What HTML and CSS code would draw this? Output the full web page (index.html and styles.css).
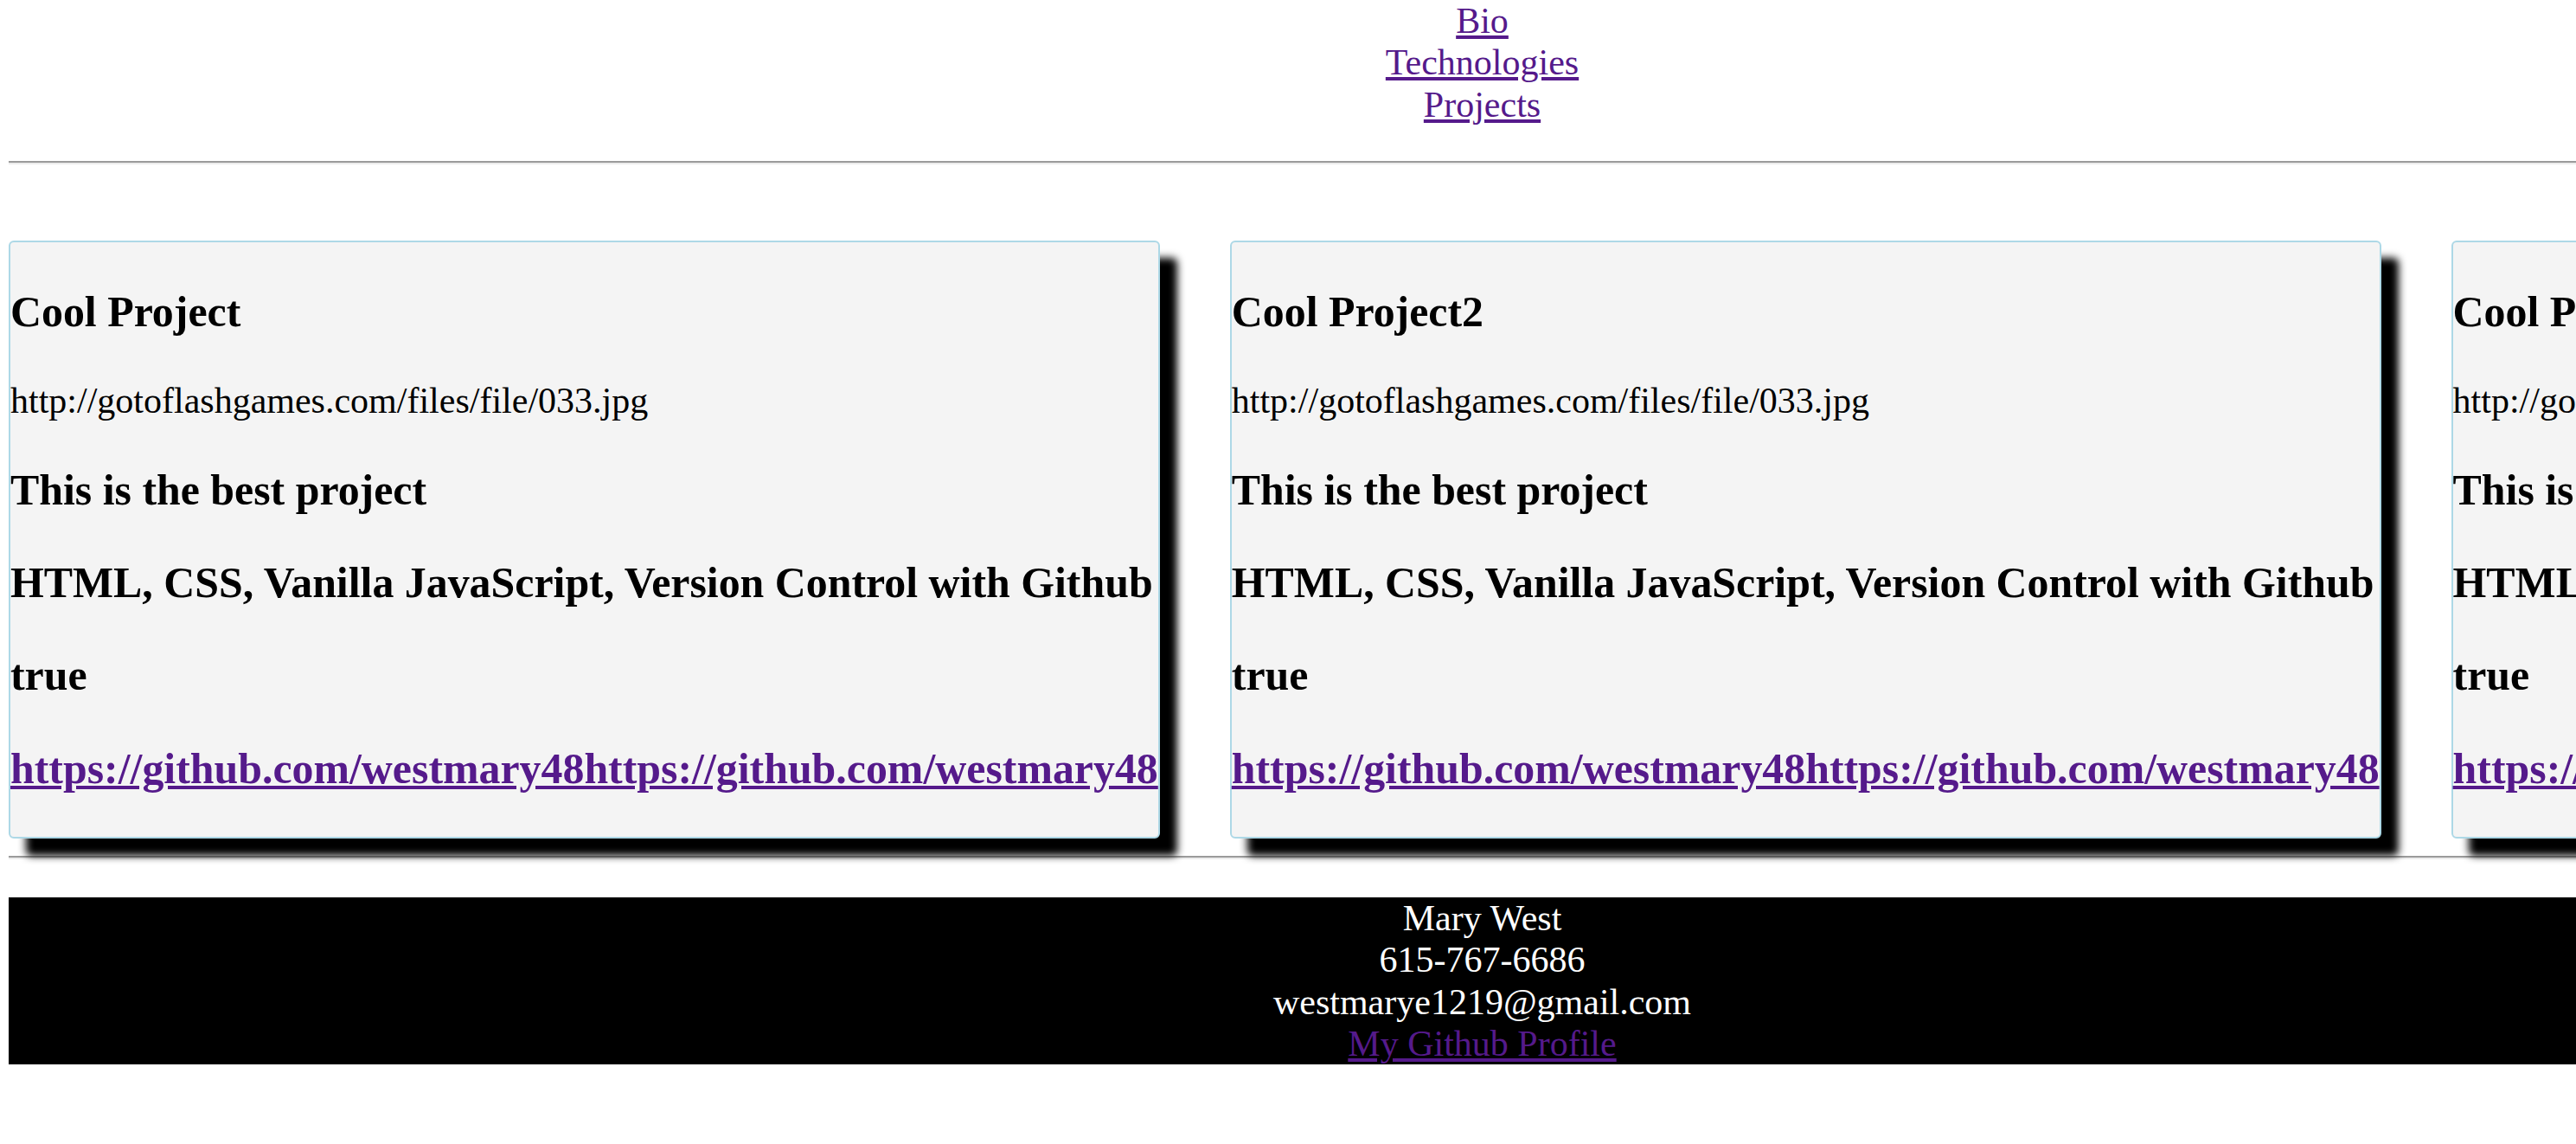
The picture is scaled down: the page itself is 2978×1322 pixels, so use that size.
FILE: index.html
```html
<!DOCTYPE html>
<html lang="en">
<head>
<meta charset="utf-8">
<title>Mary West</title>
<link rel="stylesheet" href="styles.css">
</head>
<body>
<div class="page">
  <nav class="nav">
    <a class="link" href="#bio">Bio</a>
    <a class="link" href="#technologies">Technologies</a>
    <a class="link" href="#projects">Projects</a>
  </nav>
  <hr class="rule rule-top">
  <section class="projects" id="projects">
    <article class="card">
      <h3 class="card-line">Cool Project</h3>
      <p class="card-image">http://gotoflashgames.com/files/file/033.jpg</p>
      <h3 class="card-line">This is the best project</h3>
      <h3 class="card-line">HTML, CSS, Vanilla JavaScript, Version Control with Github</h3>
      <h3 class="card-line">true</h3>
      <h3 class="card-line"><a class="link" href="#">https://github.com/westmary48https://github.com/westmary48</a></h3>
    </article>
    <article class="card">
      <h3 class="card-line">Cool Project2</h3>
      <p class="card-image">http://gotoflashgames.com/files/file/033.jpg</p>
      <h3 class="card-line">This is the best project</h3>
      <h3 class="card-line">HTML, CSS, Vanilla JavaScript, Version Control with Github</h3>
      <h3 class="card-line">true</h3>
      <h3 class="card-line"><a class="link" href="#">https://github.com/westmary48https://github.com/westmary48</a></h3>
    </article>
    <article class="card">
      <h3 class="card-line">Cool Project3</h3>
      <p class="card-image">http://gotoflashgames.com/files/file/033.jpg</p>
      <h3 class="card-line">This is the best project</h3>
      <h3 class="card-line">HTML, CSS, Vanilla JavaScript, Version Control with Github</h3>
      <h3 class="card-line">true</h3>
      <h3 class="card-line"><a class="link" href="#">https://github.com/westmary48https://github.com/westmary48</a></h3>
    </article>
  </section>
  <hr class="rule rule-bottom">
  <footer class="footer">
    <div class="footer-line">Mary West</div>
    <div class="footer-line">615-767-6686</div>
    <div class="footer-line">westmarye1219@gmail.com</div>
    <a class="link" href="#">My Github Profile</a>
  </footer>
</div>
</body>
</html>
```

FILE: styles.css
```css
html {
  overflow: hidden;
}

body {
  margin: 0;
  background: #ffffff;
  color: #000000;
  font-family: "Liberation Serif", "Times New Roman", serif;
  font-size: 42px;
  line-height: 1.15;
}

.page {
  padding-left: 10px;
}

.link {
  color: #551a8b;
  text-decoration: underline;
}

.nav {
  width: 3407px;
  display: flex;
  flex-direction: column;
  align-items: center;
}

.rule {
  height: 0;
  margin: 0;
  border: 0;
  border-top: 2px solid #9b9b9b;
  border-bottom: 2px solid #ececec;
}

.rule-top {
  margin-top: 41px;
}

.rule-bottom {
  margin-top: 20px;
}

.projects {
  display: flex;
  align-items: flex-start;
  gap: 81px;
  margin-top: 88px;
}

.card {
  position: relative;
  flex: none;
  width: max-content;
  padding-top: 2px;
  background: #f4f4f4;
  border: 2px solid #add8e6;
  border-radius: 6px;
  box-shadow: 20px 20px 10px #000000;
  white-space: nowrap;
}

.card-line {
  margin: 50px 0;
  font-size: 49.87px;
  font-weight: bold;
}

.card-image {
  margin: 42px 0;
  font-size: 42px;
}

.footer {
  width: 3407px;
  margin-top: 44px;
  background: #000000;
  color: #ffffff;
  display: flex;
  flex-direction: column;
  align-items: center;
}
```
